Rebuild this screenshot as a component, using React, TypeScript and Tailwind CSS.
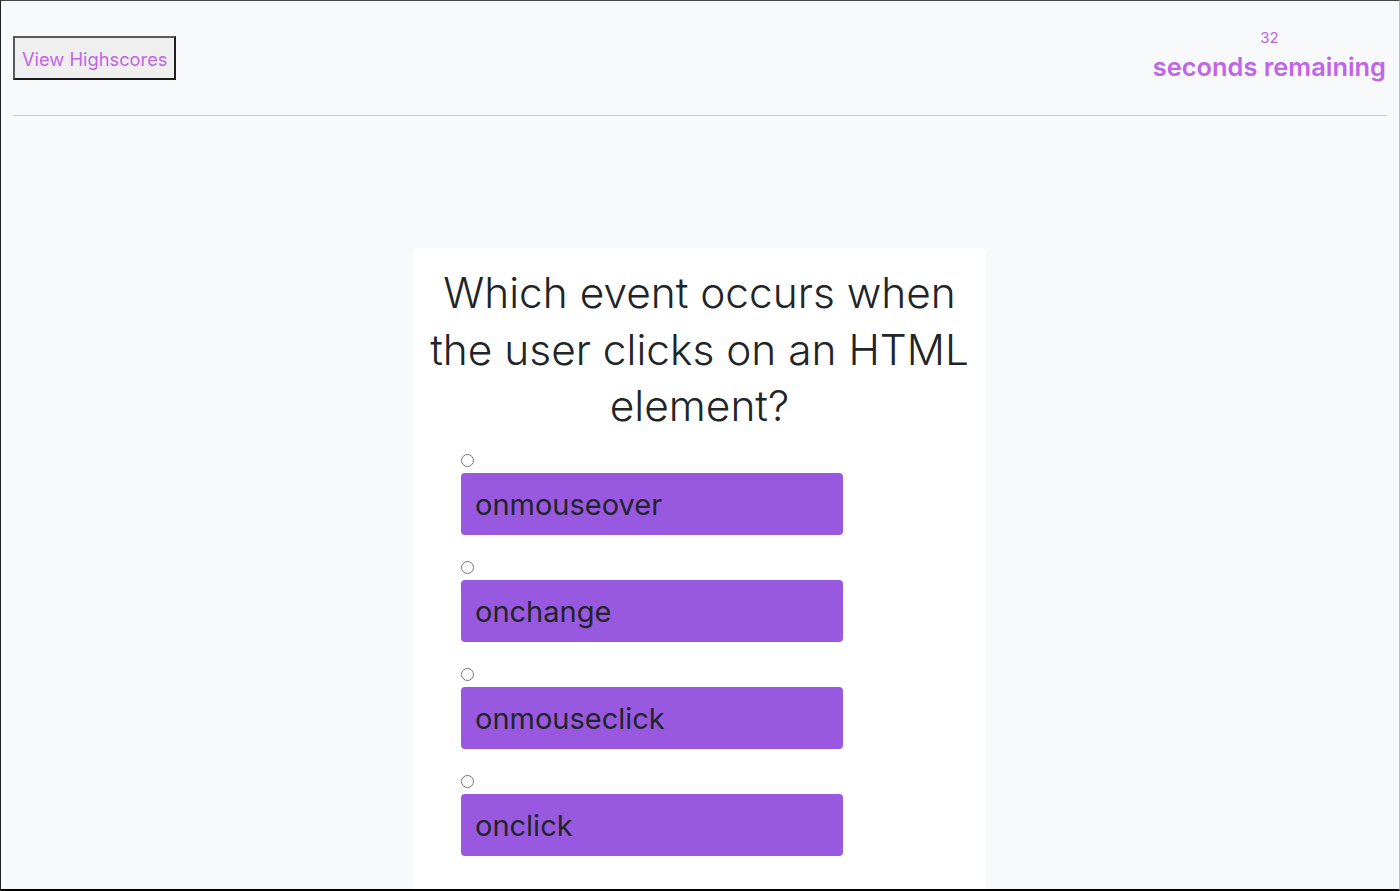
import React from "react";

const options = ["onmouseover", "onchange", "onmouseclick", "onclick"];

export default function App() {
  return (
    <div
      className="h-[891px] w-full overflow-hidden bg-[#f8f9fa] border-l border-t border-r border-b-2 border-l-[#222] border-t-[#444] border-r-[#bbb] border-b-black flex flex-col"
      style={{ fontFamily: "Inter, 'Noto Sans', sans-serif" }}
    >
      <header className="flex justify-between items-start px-3 pt-[35px] h-[114px]">
        <button className="h-[44px] px-[7px] pt-[2px] bg-[#efefef] border-2 border-t-[#5a5a5a] border-l-[#5a5a5a] border-b-[#1e1e1e] border-r-[#1e1e1e] text-[#c165e8] text-[18.3px] leading-none">
          View Highscores
        </button>
        <div className="flex flex-col items-center pr-[1px] -mt-[7px]">
          <span className="text-[15px] leading-[18px] text-[#c165e8]">32</span>
          <span className="mt-[5px] text-[25.4px] leading-[30px] font-semibold text-[#c165e8]">
            seconds remaining
          </span>
        </div>
      </header>
      <hr className="mx-3 border-0 border-t border-[#c8c8cb]" />
      <div className="flex justify-center mt-[132px] flex-1 -ml-[1px]">
        <div className="w-[573px] bg-white rounded-t-[5px] pt-[17px]">
          <h1 className="text-center text-[42.4px] leading-[56.5px] font-light text-[#212529] px-3">
            Which event occurs when the user clicks on an HTML element?
          </h1>
          <div className="pl-[48px] pt-[19px] flex flex-col gap-[26px]">
            {options.map((o) => (
              <div key={o} className="flex flex-col">
                <div className="w-[13px] h-[13px] rounded-full border border-[#767676] bg-white" />
                <button className="mt-[6px] w-[382px] h-[62px] rounded-[4px] bg-[#9859e0] text-left pl-[14px] pt-[2px] text-[29px] text-[#212529]">
                  {o}
                </button>
              </div>
            ))}
          </div>
        </div>
      </div>
    </div>
  );
}
